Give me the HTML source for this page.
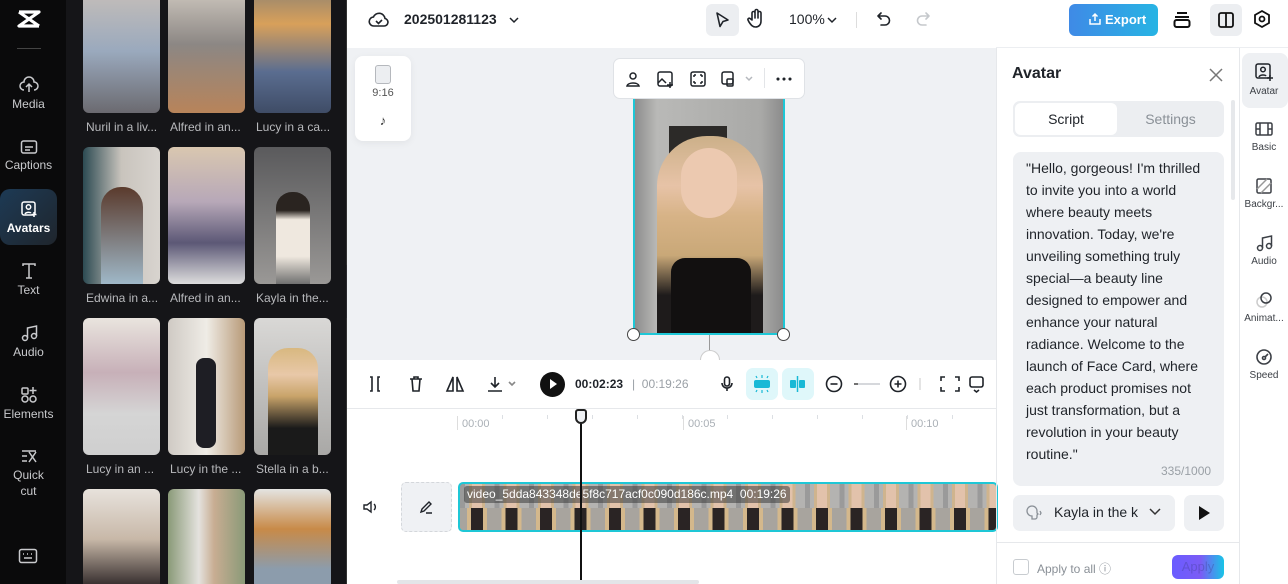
<!DOCTYPE html>
<html><head><meta charset="utf-8"><style>
*{box-sizing:border-box;margin:0;padding:0}
html,body{width:1288px;height:584px;overflow:hidden}
body{position:relative;font-family:"Liberation Sans",sans-serif;background:#fff;color:#1f2329}
.a{position:absolute}
.rail{left:0;top:0;width:66px;height:584px;background:#0a0a0b}
.ri{position:absolute;left:0;width:57px;text-align:center;color:#c9cacd;font-size:12px}
.ri svg{display:block;margin:0 auto 3px}
.panel{left:66px;top:0;width:280px;height:584px;background:#151518;overflow:hidden}
.th{position:absolute;width:77px;border-radius:6px;overflow:hidden}
.lb{position:absolute;width:80px;font-size:12px;color:#b8b9bc;white-space:nowrap}
.ic{stroke:#1f2329;fill:none;stroke-width:1.6;stroke-linecap:round;stroke-linejoin:round}
.rr{position:absolute;left:1240px;width:48px;text-align:center;font-size:10px;color:#3b3f45}
.rr svg{display:block;margin:0 auto 4px}
</style></head><body>
<div class="a rail">
 <svg class="a" style="left:16px;top:9px" width="26" height="20" viewBox="0 0 26 20"><path d="M3 3h20L3 17h20M3 3l20 14" stroke="#fff" stroke-width="3.2" fill="none" stroke-linejoin="round"/></svg>
 <div class="a" style="left:17px;top:48px;width:24px;height:1px;background:#444"></div>
 <div class="ri" style="top:76px"><svg width="20" height="18" viewBox="0 0 20 18" fill="none" stroke="#c9cacd" stroke-width="1.5"><path d="M5 14a4 4 0 0 1 0-8 5 5 0 0 1 10 0 4 4 0 0 1 0 8M10 16V9M7 11l3-3 3 3"/></svg>Media</div>
 <div class="ri" style="top:139px"><svg width="18" height="16" viewBox="0 0 18 16" fill="none" stroke="#c9cacd" stroke-width="1.5"><rect x="1.5" y="2" width="15" height="12" rx="2"/><path d="M5 8h8M5 11h5"/></svg>Captions</div>
 <div class="a" style="left:0;top:189px;width:57px;height:56px;border-radius:10px;background:linear-gradient(135deg,#1d3a55,#1f252c)"></div>
 <div class="ri" style="top:200px;color:#fff;font-weight:bold"><svg width="18" height="18" viewBox="0 0 18 18" fill="none" stroke="#fff" stroke-width="1.5"><rect x="2" y="2" width="13" height="13" rx="2"/><circle cx="8.5" cy="7" r="2.2"/><path d="M5 14c1-2 5-2 6-1M14 12v5M11.5 14.5h5"/></svg>Avatars</div>
 <div class="ri" style="top:262px"><svg width="18" height="18" viewBox="0 0 18 18" fill="none" stroke="#c9cacd" stroke-width="1.5"><path d="M3 4V2h12v2M9 2v14M6 16h6"/></svg>Text</div>
 <div class="ri" style="top:324px"><svg width="18" height="18" viewBox="0 0 18 18" fill="none" stroke="#c9cacd" stroke-width="1.5"><circle cx="5" cy="14" r="2.5"/><circle cx="14" cy="12" r="2.5"/><path d="M7.5 14V4l9-2v10"/></svg>Audio</div>
 <div class="ri" style="top:386px"><svg width="18" height="18" viewBox="0 0 18 18" fill="none" stroke="#c9cacd" stroke-width="1.5"><rect x="2" y="2" width="6" height="6" rx="1"/><path d="M13 1v7M9.5 4.5h7"/><circle cx="5" cy="13" r="3"/><circle cx="13" cy="13" r="3"/></svg>Elements</div>
 <div class="ri" style="top:448px;line-height:16px"><svg width="18" height="16" viewBox="0 0 18 16" fill="none" stroke="#c9cacd" stroke-width="1.5"><path d="M2 3h14M2 8h5M2 13h5M9 4l7 10M16 4l-7 10"/></svg>Quick<br>cut</div>
 <svg class="a" style="left:18px;top:548px" width="20" height="16" viewBox="0 0 20 16" fill="none" stroke="#c9cacd" stroke-width="1.5"><rect x="1.5" y="1.5" width="17" height="13" rx="2"/><path d="M5 6h1M9 6h1M13 6h1M6 10h8"/></svg>
</div>
<div class="a panel">
 <div class="th" style="left:17px;top:-24px;height:137px;background:linear-gradient(#cfc3b8,#9aa9bd 55%,#6b6a70)"></div>
 <div class="th" style="left:102px;top:-24px;height:137px;background:linear-gradient(#ddd6cc,#8c8784 50%,#b8845a)"></div>
 <div class="th" style="left:188px;top:-24px;height:137px;background:linear-gradient(#7b7a78,#d8a05a 35%,#5a6d90 70%,#3f4c66)"></div>
 <div class="lb" style="left:20px;top:120px">Nuril in a liv...</div>
 <div class="lb" style="left:104px;top:120px">Alfred in an...</div>
 <div class="lb" style="left:190px;top:120px">Lucy in a ca...</div>
 <div class="th" style="left:17px;top:147px;height:137px;background:linear-gradient(90deg,#2c4a52,#c9c4bd 50%,#d8d4cf);"><div class="a" style="left:18px;top:40px;width:42px;height:97px;border-radius:20px 20px 0 0;background:linear-gradient(#5a3a2c,#9fb8c8)"></div></div>
 <div class="th" style="left:102px;top:147px;height:137px;background:linear-gradient(#d9c7b0,#b7a8b8 40%,#5c5876 70%,#ddd)"></div>
 <div class="th" style="left:188px;top:147px;height:137px;background:linear-gradient(#5a5a5c,#9a9896);"><div class="a" style="left:22px;top:45px;width:34px;height:92px;border-radius:16px 16px 0 0;background:linear-gradient(#2a2420 20%,#efe8df 30%,#efe8df 70%,#707070)"></div></div>
 <div class="lb" style="left:20px;top:291px">Edwina in a...</div>
 <div class="lb" style="left:104px;top:291px">Alfred in an...</div>
 <div class="lb" style="left:190px;top:291px">Kayla in the...</div>
 <div class="th" style="left:17px;top:318px;height:137px;background:linear-gradient(#e9e4de,#c7b0b8 40%,#d5d5d5 70%,#cfcfcf)"></div>
 <div class="th" style="left:102px;top:318px;height:137px;background:linear-gradient(90deg,#cfcac4,#efece6 50%,#b89a78);"><div class="a" style="left:28px;top:40px;width:20px;height:90px;border-radius:8px;background:#1e1e24"></div></div>
 <div class="th" style="left:188px;top:318px;height:137px;background:linear-gradient(#d9d8d6,#a9a8a6);"><div class="a" style="left:14px;top:30px;width:50px;height:107px;border-radius:20px 20px 0 0;background:linear-gradient(#d8b880,#e8c8a8 25%,#c9a46a 45%,#1a1a1a 75%)"></div></div>
 <div class="lb" style="left:20px;top:462px">Lucy in an ...</div>
 <div class="lb" style="left:104px;top:462px">Lucy in the ...</div>
 <div class="lb" style="left:190px;top:462px">Stella in a b...</div>
 <div class="th" style="left:17px;top:489px;height:100px;background:linear-gradient(#e7e2dc,#c8b8a8 50%,#2a2224)"></div>
 <div class="th" style="left:102px;top:489px;height:100px;background:linear-gradient(90deg,#8a9a78,#e4e2de 40%,#c8ad92 60%,#8a9a78)"></div>
 <div class="th" style="left:188px;top:489px;height:100px;background:linear-gradient(#e4e4e2,#c88a48 40%,#8c9cac 80%)"></div>
</div>
<div class="a" style="left:346px;top:0;width:1px;height:584px;background:#333"></div>
<div class="a" style="left:346px;top:265px;width:7px;height:53px;background:#2a2a2e;border-radius:0 4px 4px 0"></div>
<svg class="a" style="left:368px;top:10px" width="22" height="20" viewBox="0 0 22 20" fill="none" stroke="#1f2329" stroke-width="1.6"><path d="M6 16a4.5 4.5 0 0 1-.5-9 6 6 0 0 1 11.5 1.5A3.8 3.8 0 0 1 16 16z"/><path d="M8 11l2.5 2.5L14 10"/></svg>
<div class="a" style="left:404px;top:11px;font-size:14px;font-weight:bold">202501281123</div>
<svg class="a" style="left:508px;top:15px" width="12" height="10"><path d="M2 3l4 4 4-4" stroke="#1f2329" stroke-width="1.5" fill="none"/></svg>
<div class="a" style="left:706px;top:4px;width:33px;height:32px;border-radius:6px;background:#eceef1"></div>
<svg class="a" style="left:713px;top:10px" width="18" height="20" viewBox="0 0 18 20"><path d="M4 3l11 7-5 1.5-3 5z" class="ic"/></svg>
<svg class="a" style="left:746px;top:8px" width="20" height="22" viewBox="0 0 20 22"><path d="M6 12V5a1.5 1.5 0 0 1 3 0v5V3a1.5 1.5 0 0 1 3 0v7V5a1.5 1.5 0 0 1 3 0v8c0 4-2.5 6-5.5 6S5 17 3 14l-1-2a1.3 1.3 0 0 1 2-1.5z" class="ic"/></svg>
<div class="a" style="left:789px;top:11px;font-size:14px">100%</div>
<svg class="a" style="left:826px;top:15px" width="12" height="10"><path d="M2 3l4 4 4-4" stroke="#1f2329" stroke-width="1.5" fill="none"/></svg>
<div class="a" style="left:856px;top:12px;width:1px;height:16px;background:#ddd"></div>
<svg class="a" style="left:875px;top:10px" width="18" height="20" viewBox="0 0 18 20"><path d="M6 3L3 6l3 3M3 6h7a4.5 4.5 0 0 1 0 9H6" class="ic"/></svg>
<svg class="a" style="left:914px;top:10px" width="18" height="20" viewBox="0 0 18 20"><path d="M12 3l3 3-3 3M15 6H8a4.5 4.5 0 0 0 0 9h4" class="ic" style="stroke:#c5c8cc"/></svg>
<div class="a" style="left:1069px;top:4px;width:89px;height:32px;border-radius:6px;background:linear-gradient(90deg,#3f8ae6,#27b4e4);color:#fff;font-size:13px;font-weight:bold;line-height:32px;padding-left:36px">Export</div>
<svg class="a" style="left:1088px;top:12px" width="14" height="14" viewBox="0 0 14 14" fill="none" stroke="#fff" stroke-width="1.5"><path d="M2 7v5h10V7M7 9V2M4.5 4.5L7 2l2.5 2.5"/></svg>
<svg class="a" style="left:1172px;top:10px" width="20" height="20" viewBox="0 0 20 20" fill="none" stroke="#111" stroke-width="2"><path d="M5 3h10M3 7h14"/><rect x="2.5" y="10" width="15" height="7" rx="2"/></svg>
<div class="a" style="left:1210px;top:4px;width:32px;height:32px;border-radius:6px;background:#eceef1"></div>
<svg class="a" style="left:1216px;top:10px" width="20" height="20" viewBox="0 0 20 20" fill="none" stroke="#111" stroke-width="1.8"><rect x="3" y="3" width="14" height="14" rx="2"/><path d="M10 3v14"/></svg>
<svg class="a" style="left:1252px;top:9px" width="20" height="20" viewBox="0 0 20 20" fill="none" stroke="#111" stroke-width="1.8"><path d="M10 2l7 4v8l-7 4-7-4V6z"/><circle cx="10" cy="10" r="2.5"/></svg>
<div class="a" style="left:347px;top:48px;width:649px;height:312px;background:#eff1f4"></div>
<div class="a" style="left:355px;top:56px;width:56px;height:85px;border-radius:8px;background:#fff;box-shadow:0 2px 8px rgba(0,0,0,.06)"></div>
<div class="a" style="left:375px;top:65px;width:16px;height:19px;border:1.5px solid #b5b8bd;border-radius:3px;background:#eceef1"></div>
<div class="a" style="left:355px;top:87px;width:56px;text-align:center;font-size:11px;color:#555">9:16</div>
<div class="a" style="left:355px;top:113px;width:56px;text-align:center;font-size:13px;font-weight:bold;color:#333">♪</div>
<div class="a" style="left:633px;top:96px;width:152px;height:239px;border:2px solid #1ec7d6;background:linear-gradient(90deg,#8d8d8d,#b9b9b7 15%,#a9a9a7 85%,#8c8c8c);overflow:hidden">
 <div class="a" style="left:34px;top:28px;width:58px;height:70px;background:#2c2a28"></div>
 <div class="a" style="left:22px;top:38px;width:106px;height:199px;border-radius:50px 50px 0 0;background:linear-gradient(#ccb089,#e7c3a7 25%,#d7b387 40%,#c9a878 60%,#1e1b1b 80%)"></div>
 <div class="a" style="left:46px;top:50px;width:56px;height:70px;border-radius:28px;background:#ecc9b0"></div>
 <div class="a" style="left:36px;top:160px;width:80px;height:77px;border-radius:14px 14px 0 0;background:#121010"></div>
</div>
<div class="a" style="left:627px;top:328px;width:13px;height:13px;border-radius:50%;background:#fff;border:1px solid #444"></div>
<div class="a" style="left:777px;top:328px;width:13px;height:13px;border-radius:50%;background:#fff;border:1px solid #444"></div>
<div class="a" style="left:709px;top:335px;width:1px;height:16px;background:#999"></div>
<div class="a" style="left:700px;top:350px;width:20px;height:10px;border-radius:10px 10px 0 0;background:#fff;border:1px solid #ccc;border-bottom:none"></div>
<div class="a" style="left:613px;top:58px;width:192px;height:41px;border-radius:7px;background:#fff;border:1px solid #dfe2e6"></div>
<svg class="a" style="left:623px;top:69px" width="180" height="20" viewBox="0 0 180 20" fill="none" stroke="#1f2329" stroke-width="1.5">
 <circle cx="10" cy="7" r="3"/><path d="M4 17c1-4 11-4 12 0z"/>
 <rect x="35" y="3" width="14" height="14" rx="2"/><path d="M35 14l4-4 4 4M47 13v6M44 16h6"/>
 <rect x="68" y="3" width="14" height="14" rx="2"/><path d="M71 6h2M71 6v2M79 6h-2M79 6v2M71 14h2M71 14v-2M79 14h-2M79 14v-2"/>
 <rect x="99" y="3" width="11" height="12" rx="2"/><rect x="104" y="10" width="6" height="7" rx="1"/>
 <path d="M123 8l3 3 3-3" stroke="#b5b8bd"/>
 <circle cx="155" cy="10" r=".8" fill="#1f2329"/><circle cx="161" cy="10" r=".8" fill="#1f2329"/><circle cx="167" cy="10" r=".8" fill="#1f2329"/>
</svg>
<div class="a" style="left:764px;top:68px;width:1px;height:20px;background:#e3e5e8"></div>
<div class="a" style="left:347px;top:408px;width:649px;height:1px;background:#e6e8eb"></div>
<svg class="a" style="left:366px;top:374px" width="460" height="20" viewBox="0 0 460 20" fill="none" stroke="#1f2329" stroke-width="1.6">
 <path d="M4 3h2v14H4M14 3h-2v14h2"/>
 <path d="M44 5h12M48 5V3h4v2M46 5l1 12h6l1-12"/>
 <path d="M87 3v14l-6 0zM91 3v14l6 0z"/>
 <path d="M129 3v10M125 9l4 4 4-4M122 17h14"/><path d="M143 8l3 3 3-3" stroke="#888"/>
 <path d="M361 3a2.5 2.5 0 0 1 2.5 2.5v4a2.5 2.5 0 0 1-5 0v-4A2.5 2.5 0 0 1 361 3zM356 9a5 5 0 0 0 10 0M361 14v3"/>
</svg>
<div class="a" style="left:540px;top:372px;width:25px;height:25px;border-radius:50%;background:#111"></div>
<div class="a" style="left:550px;top:379px;width:0;height:0;border-left:7px solid #fff;border-top:5px solid transparent;border-bottom:5px solid transparent"></div>
<div class="a" style="left:575px;top:377px;font-size:12px;font-weight:bold">00:02:23</div>
<div class="a" style="left:632px;top:377px;font-size:12px;color:#9aa0a6">|&nbsp; 00:19:26</div>
<div class="a" style="left:746px;top:368px;width:32px;height:32px;border-radius:7px;background:#dff7fa"></div>
<div class="a" style="left:782px;top:368px;width:32px;height:32px;border-radius:7px;background:#dff7fa"></div>
<svg class="a" style="left:750px;top:373px" width="60" height="22" viewBox="0 0 60 22"><rect x="4" y="7" width="16" height="8" rx="2" fill="#18b9d6"/><path d="M6 3l1 2M12 2v3M18 3l-1 2M6 19l1-2M12 20v-3M18 19l-1-2" stroke="#18b9d6" stroke-width="1.2"/><rect x="40" y="7" width="6" height="8" rx="1" fill="#18b9d6"/><rect x="49" y="7" width="6" height="8" rx="1" fill="#18b9d6"/><path d="M47.5 3v16" stroke="#18b9d6" stroke-width="1.5"/></svg>
<svg class="a" style="left:824px;top:374px" width="160" height="20" viewBox="0 0 160 20" fill="none" stroke="#1f2329" stroke-width="1.6"><circle cx="10" cy="10" r="7.5"/><path d="M6.5 10h7"/><path d="M30 10h26" stroke="#c8ccd0"/><path d="M30 10h4" stroke="#555"/><circle cx="74" cy="10" r="7.5"/><path d="M70.5 10h7M74 6.5v7"/><path d="M96 4v12" stroke="#ddd"/><path d="M117 7V3h4M131 3h4v4M117 13v4h4M131 17h4v-4"/><rect x="146" y="3" width="13" height="10" rx="2"/><path d="M150 16l2.5 2 2.5-2"/></svg>
<div class="a" style="left:457px;top:416px;width:1px;height:14px;background:#ddd"></div>
<div class="a" style="left:683px;top:416px;width:1px;height:14px;background:#ddd"></div>
<div class="a" style="left:906px;top:416px;width:1px;height:14px;background:#ddd"></div>
<div class="a" style="left:462px;top:418px;font-size:11px;color:#aab0b6">00:00</div>
<div class="a" style="left:688px;top:418px;font-size:11px;color:#aab0b6">00:05</div>
<div class="a" style="left:911px;top:418px;font-size:11px;color:#aab0b6">00:10</div>
<div class="a" style="left:458px;top:415px;width:538px;height:4px;background:repeating-linear-gradient(90deg,transparent 0 44px,#dcdfe3 44px 45px)"></div>
<svg class="a" style="left:362px;top:499px" width="18" height="16" viewBox="0 0 18 16" fill="none" stroke="#1f2329" stroke-width="1.4"><path d="M2 6h3l4-3v10l-4-3H2zM12 5a4 4 0 0 1 0 6"/></svg>
<div class="a" style="left:401px;top:482px;width:51px;height:50px;border-radius:5px;background:#eff1f4;border:1px dashed #d4d7db"></div>
<svg class="a" style="left:418px;top:499px" width="16" height="16" viewBox="0 0 16 16" fill="none" stroke="#1f2329" stroke-width="1.4"><path d="M3 13l1-3 7-7 2 2-7 7zM8 14h6"/></svg>
<div class="a" style="left:458px;top:482px;width:540px;height:50px;border:2px solid #1ec7d6;border-radius:5px;background:repeating-linear-gradient(90deg,#9a9a9a 0 5px,#b4b3b1 5px 9px,#cfb48e 9px 12px,#e2c2ab 12px 22px,#cfb48e 22px 25px,#b4b3b1 25px 34.5px);overflow:hidden">
 <div class="a" style="left:0;top:24px;width:540px;height:26px;background:repeating-linear-gradient(90deg,#a8a49e 0 7px,#d4b88c 7px 11px,#2a2424 11px 23px,#d4b88c 23px 27px,#a8a49e 27px 34.5px)"></div>
 <div class="a" style="left:4px;top:2px;height:17px;padding:0 3px;background:rgba(60,60,60,.55);color:#fff;font-size:12px;line-height:17px;border-radius:3px;white-space:nowrap">video_5dda843348de5f8c717acf0c090d186c.mp4 &nbsp;00:19:26</div>
</div>
<div class="a" style="left:580px;top:418px;width:2px;height:166px;background:#111"></div>
<div class="a" style="left:575px;top:409px;width:12px;height:15px;border:2px solid #222;border-radius:3px 3px 6px 6px;background:#eff1f4"></div>
<div class="a" style="left:397px;top:580px;width:302px;height:4px;border-radius:2px;background:#e3e5e8"></div>
<div class="a" style="left:996px;top:48px;width:1px;height:536px;background:#e6e8eb"></div>
<div class="a" style="left:1239px;top:48px;width:1px;height:536px;background:#e6e8eb"></div>
<div class="a" style="left:996px;top:47px;width:292px;height:1px;background:#eceef1"></div>
<div class="a" style="left:1012px;top:65px;font-size:16px;font-weight:bold">Avatar</div>
<svg class="a" style="left:1209px;top:68px" width="14" height="14" viewBox="0 0 14 14" stroke="#777" stroke-width="1.5"><path d="M1 1l12 12M13 1L1 13"/></svg>
<div class="a" style="left:1013px;top:101px;width:211px;height:36px;border-radius:7px;background:#eceef1"></div>
<div class="a" style="left:1015px;top:103px;width:102px;height:32px;border-radius:6px;background:#fff;text-align:center;line-height:32px;font-size:14px">Script</div>
<div class="a" style="left:1119px;top:103px;width:103px;height:32px;text-align:center;line-height:32px;font-size:14px;color:#8a9097">Settings</div>
<div class="a" style="left:1231px;top:100px;width:4px;height:100px;border-radius:2px;background:#e6e8eb"></div>
<div class="a" style="left:1013px;top:152px;width:211px;height:334px;border-radius:8px;background:#eef0f3"></div>
<div class="a" style="left:1026px;top:157px;width:186px;font-size:14px;line-height:22px;color:#1f2329">"Hello, gorgeous! I'm thrilled to invite you into a world where beauty meets innovation. Today, we're unveiling something truly special—a beauty line designed to empower and enhance your natural radiance. Welcome to the launch of Face Card, where each product promises not just transformation, but a revolution in your beauty routine."</div>
<div class="a" style="left:1161px;top:464px;font-size:12px;color:#9aa0a6">335/1000</div>
<div class="a" style="left:1013px;top:495px;width:162px;height:36px;border-radius:7px;background:#eef0f3"></div>
<svg class="a" style="left:1026px;top:504px" width="18" height="18" viewBox="0 0 18 18" fill="none" stroke="#8a9097" stroke-width="1.3"><path d="M9 15H6v-3a5 5 0 1 1 5-5v2l1 1-1 1v2a2 2 0 0 1-2 2zM14 7l1 2-1 2"/></svg>
<div class="a" style="left:1054px;top:504px;font-size:14px">Kayla in the k</div>
<svg class="a" style="left:1148px;top:507px" width="14" height="10"><path d="M2 2l5 5 5-5" stroke="#333" stroke-width="1.5" fill="none"/></svg>
<div class="a" style="left:1184px;top:495px;width:40px;height:36px;border-radius:7px;background:#eef0f3"></div>
<div class="a" style="left:1199px;top:506px;border-left:11px solid #111;border-top:7px solid transparent;border-bottom:7px solid transparent"></div>
<div class="a" style="left:997px;top:542px;width:242px;height:1px;background:#e6e8eb"></div>
<div class="a" style="left:1013px;top:559px;width:16px;height:16px;border:1px solid #c8ccd0;border-radius:3px"></div>
<div class="a" style="left:1037px;top:560px;font-size:12px;color:#8a9097">Apply to all ⓘ</div>
<div class="a" style="left:1172px;top:555px;width:52px;height:24px;border-radius:6px;background:linear-gradient(90deg,#6a5cff,#7b5cf5 55%,#18c4e6);color:rgba(60,60,140,.35);font-size:13px;text-align:center;line-height:24px">Apply</div>
<div class="a" style="left:1242px;top:53px;width:46px;height:55px;border-radius:8px;background:#eef0f3"></div>
<div class="rr" style="top:62px"><svg width="20" height="20" viewBox="0 0 20 20" fill="none" stroke="#1f2329" stroke-width="1.5"><rect x="2" y="2" width="14" height="14" rx="2"/><circle cx="9" cy="7.5" r="2.3"/><path d="M5 15c1-2.5 6-2.5 7-1M16 13v6M13 16h6"/></svg>Avatar</div>
<div class="rr" style="top:120px"><svg width="20" height="18" viewBox="0 0 20 18" fill="none" stroke="#3b3f45" stroke-width="1.5"><rect x="2" y="3" width="16" height="12" rx="1.5"/><path d="M6 3v12M14 3v12M2 9h4M14 9h4"/></svg>Basic</div>
<div class="rr" style="top:177px"><svg width="20" height="18" viewBox="0 0 20 18" fill="none" stroke="#3b3f45" stroke-width="1.5"><rect x="3" y="2" width="14" height="14" rx="1.5"/><path d="M3 12l10-10M7 16l10-10" stroke="#999"/></svg>Backgr...</div>
<div class="rr" style="top:234px"><svg width="20" height="18" viewBox="0 0 20 18" fill="none" stroke="#3b3f45" stroke-width="1.5"><circle cx="6" cy="14" r="2.5"/><circle cx="15" cy="12" r="2.5"/><path d="M8.5 14V4l9-2v10"/></svg>Audio</div>
<div class="rr" style="top:291px"><svg width="20" height="18" viewBox="0 0 20 18" fill="none" stroke-width="1.5"><circle cx="8" cy="11" r="5" stroke="#ccc"/><circle cx="12" cy="7" r="5" stroke="#3b3f45"/></svg>Animat...</div>
<div class="rr" style="top:348px"><svg width="20" height="18" viewBox="0 0 20 18" fill="none" stroke="#3b3f45" stroke-width="1.6"><circle cx="10" cy="9" r="7"/><circle cx="10" cy="10" r="1.5"/><path d="M11 9l3-3"/></svg>Speed</div>
</body></html>
